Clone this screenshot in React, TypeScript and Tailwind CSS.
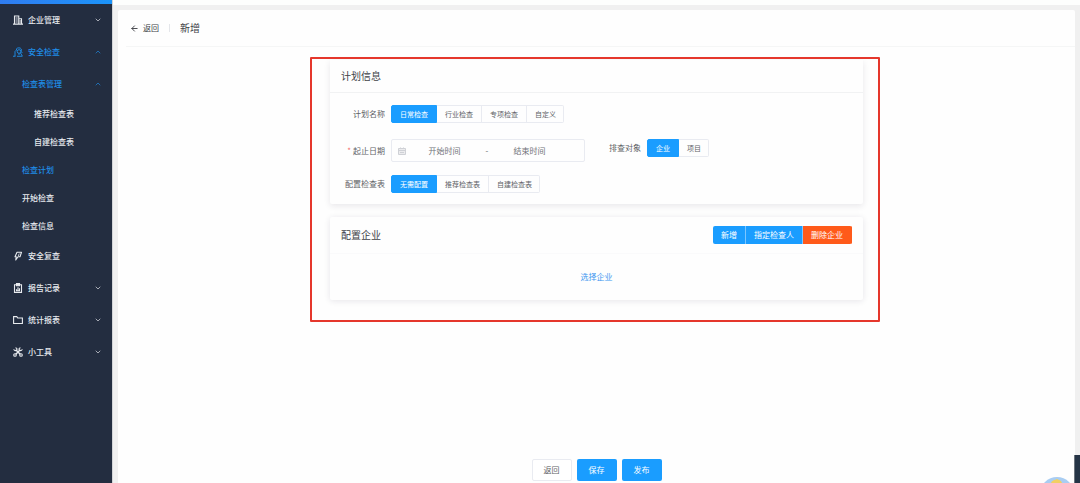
import { type ReactNode } from 'react';
import { ArrowLeft, ChevronDown, ChevronUp } from 'lucide-react';

interface MenuItem {
  label: string;
  level: 1 | 2 | 3;
  icon?: ReactNode;
  active?: boolean;
  expanded?: boolean;
}

const iconProps = {
  viewBox: '0 0 20 20',
  fill: 'none',
  stroke: 'currentColor',
  strokeWidth: 2.2,
  className: 'size-[10px] shrink-0',
  'aria-hidden': true,
};

const BuildingIcon = () => (
  <svg {...iconProps}>
    <path d="M3 18V2h8.500v16M11.500 7.500H17V18M0 18.200h20" />
    <path d="M5 6h4.500M5 10h4.500M5 14h4.500M14.200 10v7" strokeWidth={1.800} />
  </svg>
);

const InspectIcon = () => (
  <svg {...iconProps} strokeWidth={1.900}>
    <path d="M0 18.500h5M4 18V9l3-3V3.500C9 1 15 1 16.500 4v5l2 3" />
    <circle cx="12" cy="9" r="3.600" />
    <path d="M12 12.500V16M8 18.500h11M15 12l3.500 6" />
  </svg>
);

const BoltIcon = () => (
  <svg {...iconProps} strokeLinejoin="round">
    <path d="M8 2.500h9l-3 9H10L5.500 18l1-6.500H4z" />
    <path d="M12.500 5l-2 5" strokeWidth={1.600} />
  </svg>
);

const ReportIcon = () => (
  <svg {...iconProps}>
    <path d="M3 3.500h14v15.300H3z" />
    <path d="M7 1h6v4.500H7z" fill="currentColor" />
    <path d="M7 15.500v-3M10 15.500V8.500M13 15.500v-5M6 15.500h8" />
  </svg>
);

const FolderIcon = () => (
  <svg {...iconProps}>
    <path d="M1.200 3.200h6.300L9.500 6h9.300v11H1.200z" />
  </svg>
);

const ToolsIcon = () => (
  <svg {...iconProps}>
    <path d="M5.500 5.500l9 9M14.500 5.500l-9 9" strokeWidth={3} />
    <path d="M1.500 4.500C2 7 5 8 7 6.500S8 2 5 1.500M18.500 4.500C18 7 15 8 13 6.500S12 2 15 1.500" />
    <circle cx="4" cy="16" r="2.600" />
    <circle cx="16" cy="16" r="2.600" />
  </svg>
);

const menu: MenuItem[] = [
  { label: '企业管理', level: 1, icon: <BuildingIcon />, expanded: false },
  { label: '安全检查', level: 1, icon: <InspectIcon />, active: true, expanded: true },
  { label: '检查表管理', level: 2, active: true, expanded: true },
  { label: '推荐检查表', level: 3 },
  { label: '自建检查表', level: 3 },
  { label: '检查计划', level: 2, active: true },
  { label: '开始检查', level: 2 },
  { label: '检查信息', level: 2 },
  { label: '安全复查', level: 1, icon: <BoltIcon /> },
  { label: '报告记录', level: 1, icon: <ReportIcon />, expanded: false },
  { label: '统计报表', level: 1, icon: <FolderIcon />, expanded: false },
  { label: '小工具', level: 1, icon: <ToolsIcon />, expanded: false },
];

const indent = {
  1: 'pl-[13px]',
  2: 'pl-[22px]',
  3: 'pl-[34px]',
};

function MenuRow({ item }: { item: MenuItem }) {
  const hasChildren = item.expanded !== undefined;
  const height = item.level === 1 || hasChildren ? 'h-8' : 'h-7';
  const color = item.active ? 'text-[#1f8ce6]' : 'text-[#e8ebef]';
  const row = `flex w-full items-center gap-[5px] pr-[10px] font-medium ${height} ${indent[item.level]} ${color}`;

  if (!hasChildren) {
    return (
      <a href="#" className={row}>
        {item.icon}
        {item.label}
      </a>
    );
  }

  const Chevron = item.expanded ? ChevronUp : ChevronDown;
  return (
    <button type="button" aria-expanded={item.expanded} className={row}>
      {item.icon}
      {item.label}
      <Chevron className="ml-auto size-2 opacity-80" strokeWidth={2.5} />
    </button>
  );
}

function Segmented({ name, label, options }: { name: string; label: string; options: string[] }) {
  return (
    <div role="radiogroup" aria-label={label} className="flex h-[18px] text-[7px] text-[#606266]">
      {options.map((option, i) => (
        <label
          key={option}
          className="relative flex cursor-pointer items-center border-y border-r border-[#e9ebf1] px-2 first:rounded-l-xs first:border-l last:rounded-r-xs last:pr-[7px] has-checked:border-[#1a9dff] has-checked:bg-[#1a9dff] has-checked:text-white"
        >
          <input type="radio" name={name} defaultChecked={i === 0} className="sr-only" />
          {option}
        </label>
      ))}
    </div>
  );
}

function FieldLabel({ children, required }: { children: string; required?: boolean }) {
  return (
    <span className="w-[55px] shrink-0 text-right text-[#606266]">
      {required && <span className="mr-0.5 text-[#f56c6c]">*</span>}
      {children}
    </span>
  );
}

export default function App() {
  return (
    <div className="flex min-h-screen bg-[#f0f0f0] font-['Noto_Sans_CJK_SC',sans-serif] text-[8px] leading-3">
      <aside className="w-28 shrink-0 bg-[#232d40]">
        <div className="h-1 bg-gradient-to-r from-[#2f7cf0] to-[#1a94fa]" />
        <nav>
          {menu.map((item) => (
            <MenuRow key={item.label} item={item} />
          ))}
        </nav>
      </aside>

      <div className="flex min-w-0 flex-1 flex-col border-l border-[#d3d5d8]">
        <div className="h-[5px] bg-[#fdfefd]" />
        <main className="mt-[5px] mr-[5px] ml-[5px] flex flex-1 flex-col rounded-t-xs bg-[#fefefe]">
          <header className="ml-2 flex h-[37px] items-center border-b border-[#f5f6f6] pl-1">
            <button type="button" className="flex items-center gap-1 text-[#404247]">
              <ArrowLeft className="size-[9px]" strokeWidth={2.5} />
              返回
            </button>
            <span className="mx-[10px] h-2 w-px bg-[#e4e6ea]" />
            <h1 className="text-[10px] text-[#404247]">新增</h1>
          </header>

          <div className="relative mx-auto mt-[13px] w-full max-w-[533px]">
            <section className="rounded-b-xs bg-[#fefefe] pb-[11px] shadow-[0_2px_6px_rgba(40,30,60,0.10)]">
              <h2 className="flex h-[33px] items-center border-b border-[#f1f2f3] pl-[11px] text-[10px] text-[#404247]">
                计划信息
              </h2>
              <div className="mt-3 flex items-center gap-[6px]">
                <FieldLabel>计划名称</FieldLabel>
                <Segmented name="plan" label="计划名称" options={['日常检查', '行业检查', '专项检查', '自定义']} />
              </div>
              <div className="mt-4 flex items-center gap-[6px]">
                <FieldLabel required>起止日期</FieldLabel>
                <div className="flex h-[23px] w-[194px] items-center rounded-xs border border-[#e9ebf1] pr-4 pl-[6px]">
                  <svg viewBox="0 0 8 8" className="size-2 shrink-0" fill="#ececee" stroke="#cfd1d6" aria-hidden>
                    <path d="M.5 1.500h7v6h-7zM.5 3.500h7M2.500.5v1.500M5.500.5v1.500M2 5.500h4" />
                  </svg>
                  <input
                    aria-label="开始时间"
                    placeholder="开始时间"
                    className="w-full min-w-0 flex-1 text-center outline-none placeholder:text-[#707379]"
                  />
                  <span className="w-2 text-center text-[#606266]">-</span>
                  <input
                    aria-label="结束时间"
                    placeholder="结束时间"
                    className="w-full min-w-0 flex-1 text-center outline-none placeholder:text-[#707379]"
                  />
                </div>
                <div className="ml-[18px] flex items-center gap-[6px] self-start">
                  <span className="text-[#606266]">排查对象</span>
                  <Segmented name="target" label="排查对象" options={['企业', '项目']} />
                </div>
              </div>
              <div className="mt-[13px] flex items-center gap-[6px]">
                <FieldLabel>配置检查表</FieldLabel>
                <Segmented name="table" label="配置检查表" options={['无需配置', '推荐检查表', '自建检查表']} />
              </div>
            </section>

            <section className="mt-[13px] rounded-xs bg-[#fefefe] shadow-[0_1px_6px_rgba(40,30,60,0.11)]">
              <div className="flex h-[37px] items-center justify-between border-b border-[#fafafb] px-[11px]">
                <h2 className="text-[10px] text-[#404247]">配置企业</h2>
                <div className="flex h-[18px] overflow-hidden rounded-xs text-white">
                  <button type="button" className="border-r border-[#7cc6ff] bg-[#1a9dff] px-2">
                    新增
                  </button>
                  <button type="button" className="border-r border-[#7cc6ff] bg-[#1a9dff] px-2">
                    指定检查人
                  </button>
                  <button type="button" className="border-r border-[#ff5a1a] bg-[#ff5a1a] px-2">
                    删除企业
                  </button>
                </div>
              </div>
              <div className="flex h-[46px] items-center justify-center">
                <a href="#" className="text-[#3d97f0]">
                  选择企业
                </a>
              </div>
            </section>

            {/* highlight frame around the form */}
            <div className="pointer-events-none absolute -top-[3px] -right-[17px] -bottom-[22px] -left-5 rounded-[1px] border-2 border-[#e5372c]" />
          </div>

          <footer className="mt-auto flex justify-center gap-[5px] pb-0.5">
            <button type="button" className="h-[22px] w-10 rounded-xs border border-[#e9ebf1] bg-white text-[#606266]">
              返回
            </button>
            <button type="button" className="h-[22px] w-10 rounded-xs bg-[#1a9dff] text-white">
              保存
            </button>
            <button type="button" className="h-[22px] w-10 rounded-xs bg-[#1a9dff] text-white">
              发布
            </button>
          </footer>
        </main>
      </div>

      {/* floating helper and side tab, both run off the window edge */}
      <div className="fixed right-0 bottom-0 flex items-end">
        <svg width="34" height="6" viewBox="0 0 34 6" aria-hidden>
          <circle cx="17" cy="17" r="17" fill="#a9cdf2" />
          <path d="M11 6c1-3 4-3 6-4 2 1 4 1 5 4z" fill="#f2cf63" />
        </svg>
        <div className="h-7 w-[6px] border-l border-[#6c747d] bg-[#253446]" />
      </div>
    </div>
  );
}
